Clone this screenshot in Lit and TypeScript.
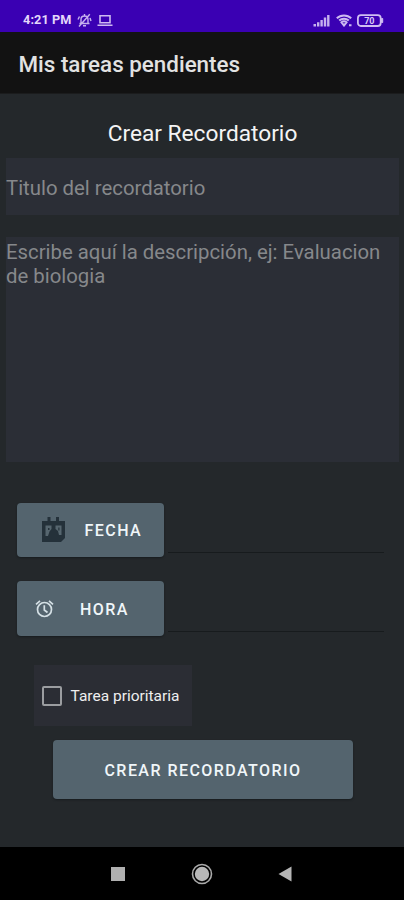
import { LitElement, html, css } from "lit";
import { customElement } from "lit/decorators.js";

@customElement("status-bar")
class StatusBar extends LitElement {
  static styles = css`
    :host { display: flex; align-items: center; justify-content: space-between; height: 32px; box-sizing: border-box; padding: 8px 20px 0 23px; background: #3a00b3; color: #d9c8f6; }
    .group { display: flex; align-items: center; height: 24px; }
    .time { font-size: 12.7px; font-weight: 700; line-height: 24px; width: 54px; white-space: nowrap; letter-spacing: 0.1px; color: #e4d8fa; }
    .laptop { margin-left: 5px; }
    .wifi { margin-left: 6px; }
    .battery { margin-left: 5px; }
    svg { display: block; }
    .pct { font: 700 9px Roboto, sans-serif; fill: #d9c8f6; }
  `;
  render() {
    return html`
      <div class="group">
        <span class="time">4:21 PM</span>
        <svg width="15" height="15" viewBox="0 0 15 15" fill="none" stroke="#c6b0ee" stroke-width="1.400">
          <path d="M2.500 10.500h10M4 10.500V6.500C4 4.300 5.500 3 7.500 3S11 4.300 11 6.500V10.500M7.500 1v2M6 12.800h3M12.800 1.200 2 13.500M2.500 3.500 1 6.500M13 5l1 3" />
        </svg>
        <svg class="laptop" width="16" height="13" viewBox="0 0 16 13" fill="none" stroke="#cdb9f1" stroke-width="1.600">
          <path d="M3 1.800h10v7H3zM.5 11.300h15" />
        </svg>
      </div>
      <div class="group">
        <svg width="17" height="13" viewBox="0 0 17 13" fill="#c6b0ee">
          <path d="M.5 10h2.500v2.500H.5zM4 8.200h2.400v4.300H4zM7.400 6h2.400v6.500H7.400zM10.800 3.600h2.400v8.900h-2.400zM14.100 1h2.400v11.500h-2.400z" />
        </svg>
        <svg class="wifi" width="16" height="13" viewBox="0 0 16 13" fill="none" stroke="#cdb9f1" stroke-width="2">
          <path d="M.8 4.300C4.800.500 11.200.500 15.200 4.300M3.200 6.600c2.700-2.500 6.900-2.500 9.600 0" />
          <path d="M5.500 8.300c1.500-1.300 3.500-1.300 5 0L8 11.500zM13 11.200h2.500" />
        </svg>
        <svg class="battery" width="27" height="13" viewBox="0 0 27 13">
          <rect x=".9" y="1.200" width="22.800" height="10.800" rx="3" fill="none" stroke="#d0bdf2" stroke-width="1.800" />
          <path d="M24.500 4.500h1.200v4h-1.200z" fill="#d0bdf2" stroke="#d0bdf2" />
          <text class="pct" x="12.300" y="9.800" text-anchor="middle">70</text>
        </svg>
      </div>
    `;
  }
}

@customElement("nav-bar")
class NavBar extends LitElement {
  static styles = css`
    :host { display: flex; align-items: center; justify-content: space-between; height: 53px; box-sizing: border-box; padding: 0 112px 0 111px; background: #000; }
    svg { display: block; }
  `;
  render() {
    return html`
      <svg width="14" height="14"><path d="M0 0h14v14H0z" fill="#b0b0b0" /></svg>
      <svg width="22" height="22" viewBox="0 0 22 22">
        <circle cx="11" cy="11" r="9.500" fill="none" stroke="#aaa" stroke-width="1.600" />
        <circle cx="11" cy="11" r="7.200" fill="#b8b8b8" />
      </svg>
      <svg width="14" height="16"><path d="M13.500.500v15L.500 8z" fill="#b5b5b5" /></svg>
    `;
  }
}

@customElement("app-root")
class AppRoot extends LitElement {
  static styles = css`
    :host { display: flex; flex-direction: column; height: 900px; width: 404px; overflow: hidden; background: #24282b; font-family: Roboto, sans-serif; }
    .appbar { height: 62px; box-sizing: border-box; padding: 3px 0 0 18.5px; display: flex; align-items: center; background: #121212; color: #e2e2e2; font-size: 22.4px; font-weight: 500; white-space: nowrap; border-bottom: 1px solid #1b1c1d; }
    main { flex: 1; display: flex; flex-direction: column; }
    h1 { margin: 26px 0 0 1px; font-size: 22.7px; font-weight: 400; line-height: 28px; text-align: center; color: #f4f4f4; }
    .field { margin: 0 5px 0 6px; background: #2b2e36; color: #86888b; font-size: 20.35px; line-height: 24px; white-space: nowrap; }
    .title { margin-top: 10px; height: 57px; line-height: 60px; }
    .desc { margin-top: 22px; height: 225px; box-sizing: border-box; padding-top: 3px; }
    .row { display: flex; height: 54px; margin-left: 17px; }
    .date { margin-top: 41px; }
    .hour { margin-top: 24px; height: 55px; }
    .btn { display: flex; align-items: center; box-sizing: border-box; border-radius: 4px; background: #54646e; color: #f0f6f9; font-size: 16px; font-weight: 500; letter-spacing: 1.450px; white-space: nowrap; box-shadow: 0 1px 2px #181c1f; }
    .row .btn { width: 147px; padding-left: 24px; }
    .hour .btn { padding: 1px 0 0 17px; }
    .row .btn svg { flex: none; }
    .date .label { margin-left: 18.5px; }
    .hour .label { margin-left: 25px; }
    .line { align-self: flex-end; width: 216px; height: 1px; margin: 0 0 4px 4px; background: #171b1d; }
    .check { display: flex; align-items: center; margin: 29px 0 0 34px; width: 158px; height: 61px; box-sizing: border-box; padding-left: 8px; background: #2b2d34; color: #efefef; font-size: 15.5px; white-space: nowrap; }
    .box { width: 20px; height: 20px; box-sizing: border-box; border: 2px solid #9b9da0; border-radius: 2px; margin-right: 8.5px; }
    .submit { margin: 14px 0 0 53px; width: 300px; height: 59px; padding-top: 2px; justify-content: center; }
  `;
  render() {
    return html`
      <status-bar></status-bar>
      <header class="appbar">Mis tareas pendientes</header>
      <main>
        <h1>Crear Recordatorio</h1>
        <div class="field title">Titulo del recordatorio</div>
        <div class="field desc">Escribe aquí la descripción, ej: Evaluacion<br />de biologia</div>
        <div class="row date">
          <div class="btn">
            <svg width="25" height="28" viewBox="0 0 25 28">
              <path d="M1 5h23v17l-4 4H1z" fill="#24313a" />
              <path d="M6.500 1h3v5h-3zM15 1h3v5h-3z" fill="#24313a" />
              <path d="M4.500 9.500h6v3.500l-2 2.500L7 20H4.500zM14.500 9.500h6V19H18l-1-4-2.500-2z" fill="#56666f" />
              <path d="M7 12h1.500v2H7zM17.300 11.500h1.200v3h-1.200z" fill="#24313a" />
            </svg>
            <span class="label">FECHA</span>
          </div>
          <div class="line"></div>
        </div>
        <div class="row hour">
          <div class="btn">
            <svg width="21" height="20" viewBox="0 0 21 20" fill="none" stroke="#d5e0e5" stroke-width="1.700">
              <circle cx="10.500" cy="10.500" r="7" />
              <path d="M10.300 6.300v4.700l3.200 2.500M2 5.400l4-3.500M19 5.400l-4-3.500" />
            </svg>
            <span class="label">HORA</span>
          </div>
          <div class="line"></div>
        </div>
        <div class="check"><span class="box"></span><span>Tarea prioritaria</span></div>
        <div class="btn submit">CREAR RECORDATORIO</div>
      </main>
      <nav-bar></nav-bar>
    `;
  }
}
